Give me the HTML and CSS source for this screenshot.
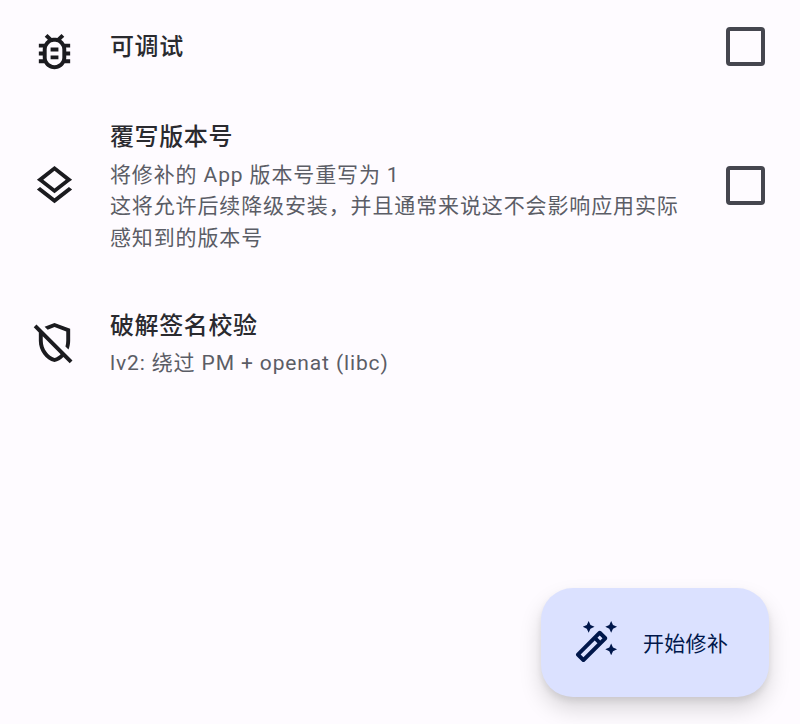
FILE: index.html
```html
<!DOCTYPE html>
<html lang="zh-CN">
<head>
<meta charset="utf-8">
<title>修补选项</title>
<link rel="stylesheet" href="styles.css">
</head>
<body>
<main class="list">
  <section class="row row-compact">
    <div class="lead"><svg class="icon" viewBox="0 0 24 24"><path d="M20 8h-2.81c-.45-.78-1.07-1.45-1.82-1.96L17 4.41 15.59 3l-2.17 2.17C12.96 5.06 12.49 5 12 5s-.96.06-1.41.17L8.41 3 7 4.41l1.62 1.63C7.88 6.55 7.26 7.22 6.81 8H4v2h2.09c-.05.33-.09.66-.09 1v1H4v2h2v1c0 .34.04.67.09 1H4v2h2.81c1.04 1.79 2.97 3 5.19 3s4.15-1.21 5.19-3H20v-2h-2.09c.05-.33.09-.66.09-1v-1h2v-2h-2v-1c0-.34-.04-.67-.09-1H20V8zm-4 4v3c0 .22-.03.47-.07.7l-.1.65-.37.65c-.72 1.24-2.04 2-3.46 2s-2.74-.77-3.46-2l-.37-.64-.1-.65C8.03 15.48 8 15.23 8 15v-4c0-.23.03-.48.07-.7l.1-.65.37-.65c.3-.52.72-.97 1.21-1.31l.57-.39.74-.18c.31-.08.63-.12.94-.12.32 0 .63.04.95.12l.68.16.61.42c.5.34.91.78 1.21 1.31l.38.65.1.65c.04.22.07.47.07.69v1zm-6 2h4v2h-4zm0-4h4v2h-4z"/></svg></div>
    <div class="body"><div class="title">可调试</div></div>
    <div class="box"></div>
  </section>
  <section class="row row-middle">
    <div class="lead"><svg class="icon" viewBox="0 0 24 24"><path d="M11.99 18.54l-7.37-5.73L3 14.07l9 7 9-7-1.63-1.27-7.38 5.74zM12 16l7.36-5.73L21 9l-9-7-9 7 1.63 1.27L12 16zm0-11.47L17.74 9 12 13.47 6.26 9 12 4.53z"/></svg></div>
    <div class="body">
      <div class="title">覆写版本号</div>
      <div class="sub">将修补的 App 版本号重写为 1<br>这将允许后续降级安装，并且通常来说这不会影响应用实际感知到的版本号</div>
    </div>
    <div class="box"></div>
  </section>
  <section class="row row-last">
    <div class="lead"><svg class="icon" viewBox="0 0 24 24"><path d="M12 4.14l6 2.25v4.7c0 1.01-.15 1.99-.41 2.94l1.55 1.55c.55-1.39.86-2.9.86-4.49V5l-8-3-5.06 1.9 1.58 1.58L12 4.14zM2.81 2.81L1.39 4.22 4 6.83v4.26c0 5.05 3.41 9.76 8 10.91 1.72-.43 3.28-1.36 4.55-2.62l3.23 3.23 1.41-1.41L2.81 2.81zM12 19.92c-3-.95-6-4.55-6-8.83V8.83l9.14 9.14c-.9.88-1.97 1.57-3.14 1.95z"/></svg></div>
    <div class="body">
      <div class="title">破解签名校验</div>
      <div class="sub">lv2: 绕过 PM + openat (libc)</div>
    </div>
  </section>
</main>
<button class="fab" type="button">
  <svg class="fab-icon" viewBox="0 0 24 24"><path d="M20 7l.94-2.06L23 4l-2.06-.94L20 1l-.94 2.06L17 4l2.06.94zM8.5 7l.94-2.06L11.5 4l-2.06-.94L8.5 1l-.94 2.06L5.5 4l2.06.94zM20 12.5l-.94 2.06-2.06.94 2.06.94.94 2.06.94-2.06L23 15.5l-2.06-.94zm-2.29-3.38l-2.83-2.83c-.2-.19-.45-.29-.71-.29-.26 0-.51.1-.71.29L2.29 17.46c-.39.39-.39 1.02 0 1.41l2.83 2.83c.2.2.45.3.71.3s.51-.1.71-.29l11.17-11.17c.39-.39.39-1.03 0-1.42zm-3.54-.7l1.41 1.41L14.41 11 13 9.59l1.17-1.17zM5.83 19.59l-1.41-1.41L11.59 11 13 12.41l-7.17 7.18z"/></svg>
  <span class="fab-label">开始修补</span>
</button>
</body>
</html>
```
FILE: styles.css
```css
* { box-sizing: border-box; }
html, body { margin: 0; height: 100%; }
body {
  background: #fefbff;
  font-family: "Roboto", "Noto Sans CJK SC", sans-serif;
  overflow: hidden;
  position: relative;
}
.list { display: flex; flex-direction: column; }
.row {
  display: flex;
  align-items: center;
  padding: 27.25px 35px 27.25px 0;
}
.row-compact { padding: 18px 35px 18.75px 0; }
.row-middle { padding-bottom: 27.5px; }
.lead {
  width: 110px;
  flex: none;
  display: flex;
  justify-content: center;
  padding-right: 2px;
}
.row-compact .lead { margin-top: 10px; }
.row-middle .lead, .row-middle .box { margin-bottom: 5px; }
.row-last .lead { margin-bottom: 4px; }
.icon { width: 47px; height: 47px; fill: #1b1b1f; display: block; flex: none; }
.body { flex: 1; min-width: 0; padding-right: 40px; }
.title {
  font-size: 24px;
  font-weight: 500;
  line-height: 32px;
  letter-spacing: 0.6px;
  color: #2a2a2f;
  margin-bottom: 6.5px;
}
.row-compact .title { margin-bottom: 0; }
.sub {
  font-size: 21px;
  line-height: 31.75px;
  letter-spacing: 0.87px;
  color: #5b5d66;
}
.box {
  width: 39px;
  height: 39px;
  flex: none;
  border: 4px solid #45464f;
  border-radius: 4px;
}
.fab {
  position: absolute;
  left: 541px;
  top: 588px;
  width: 228px;
  height: 109px;
  border: 0;
  border-radius: 32px;
  background: #dbe1ff;
  color: #00174b;
  font: inherit;
  font-size: 21px;
  letter-spacing: 0.3px;
  display: flex;
  align-items: center;
  padding: 0 0 0 31px;
  gap: 24px;
  box-shadow: 0 12px 22px rgba(0, 0, 0, 0.15), 0 4px 6px rgba(0, 0, 0, 0.08);
}
.fab-icon { width: 47px; height: 47px; fill: #00174b; flex: none; }
.fab-label { margin-top: -2px; }
```
